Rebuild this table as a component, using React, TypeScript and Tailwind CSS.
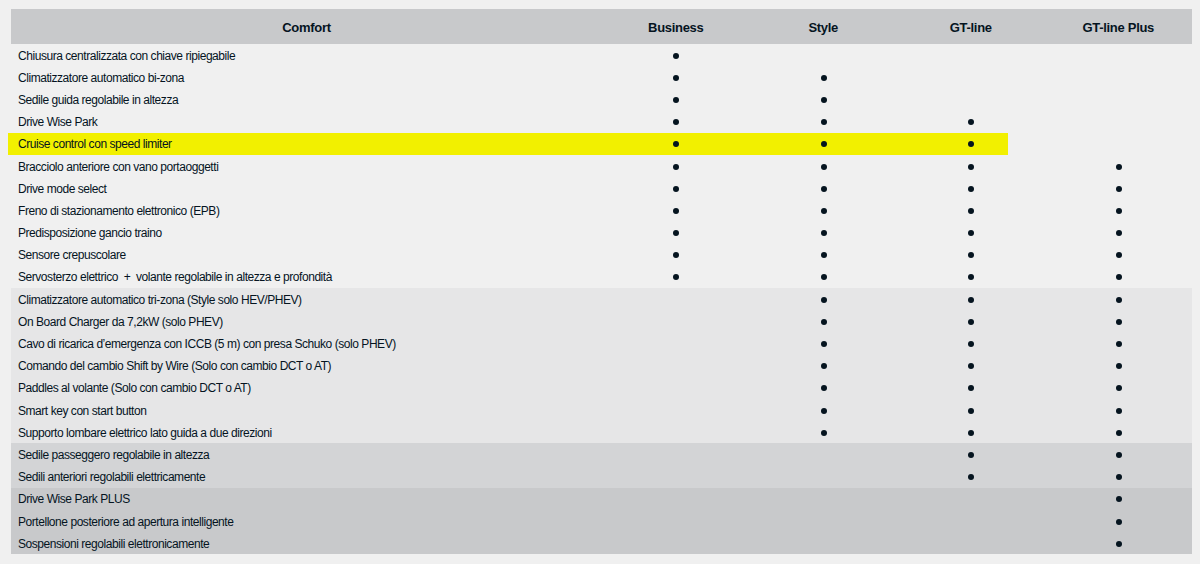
import React from 'react';

type Row = {
  label: string;
  trims: boolean[];
  highlight?: boolean;
};

type Section = {
  bg: string;
  rows: Row[];
};

const trims = ['Business', 'Style', 'GT-line', 'GT-line Plus'];

const all = [true, true, true, true];
const fromStyle = [false, true, true, true];
const fromGt = [false, false, true, true];
const plusOnly = [false, false, false, true];

const sections: Section[] = [
  {
    bg: 'bg-[#f0f0f0]',
    rows: [
      { label: 'Chiusura centralizzata con chiave ripiegabile', trims: [true, false, false, false] },
      { label: 'Climatizzatore automatico bi-zona', trims: [true, true, false, false] },
      { label: 'Sedile guida regolabile in altezza', trims: [true, true, false, false] },
      { label: 'Drive Wise Park', trims: [true, true, true, false] },
      { label: 'Cruise control con speed limiter', trims: [true, true, true, false], highlight: true },
      { label: 'Bracciolo anteriore con vano portaoggetti', trims: all },
      { label: 'Drive mode select', trims: all },
      { label: 'Freno di stazionamento elettronico (EPB)', trims: all },
      { label: 'Predisposizione gancio traino', trims: all },
      { label: 'Sensore crepuscolare', trims: all },
      { label: 'Servosterzo elettrico\u00a0 +\u00a0 volante regolabile in altezza e profondità', trims: all }
    ]
  },
  {
    bg: 'bg-[#e6e6e7]',
    rows: [
      { label: 'Climatizzatore automatico tri-zona (Style solo HEV/PHEV)', trims: fromStyle },
      { label: 'On Board Charger da 7,2kW (solo PHEV)', trims: fromStyle },
      { label: 'Cavo di ricarica d’emergenza con ICCB (5 m) con presa Schuko (solo PHEV)', trims: fromStyle },
      { label: 'Comando del cambio Shift by Wire (Solo con cambio DCT o AT)', trims: fromStyle },
      { label: 'Paddles al volante (Solo con cambio DCT o AT)', trims: fromStyle },
      { label: 'Smart key con start button', trims: fromStyle },
      { label: 'Supporto lombare elettrico lato guida a due direzioni', trims: fromStyle }
    ]
  },
  {
    bg: 'bg-[#d3d4d6]',
    rows: [
      { label: 'Sedile passeggero regolabile in altezza', trims: fromGt },
      { label: 'Sedili anteriori regolabili elettricamente', trims: fromGt }
    ]
  },
  {
    bg: 'bg-[#c8c9cb]',
    rows: [
      { label: 'Drive Wise Park PLUS', trims: plusOnly },
      { label: 'Portellone posteriore ad apertura intelligente', trims: plusOnly },
      { label: 'Sospensioni regolabili elettronicamente', trims: plusOnly }
    ]
  }
];

const Dot = () => <span className="block h-[6px] w-[6px] rounded-full bg-[#05141f]" />;

export default function App() {
  return (
    <div
      className="min-h-[564px] w-[1200px] bg-[#f0f0f0] pl-[11px] pr-[8px] pt-[9px] text-[#05141f]"
      style={{ fontFamily: '"Liberation Sans", Arial, sans-serif' }}
    >
      {/* Header */}
      <div className="grid h-[35px] grid-cols-[591px_repeat(4,147.5px)] items-center bg-[#c8c9cb] pt-[2px] text-[13px] font-bold tracking-[-0.3px]">
        <div className="text-center">Comfort</div>
        {trims.map((t) => (
          <div key={t} className="text-center">
            {t}
          </div>
        ))}
      </div>

      {/* Body */}
      {sections.map((section, si) => (
        <div key={si} className={section.bg}>
          {section.rows.map((row) => (
            <div
              key={row.label}
              className="relative grid h-[22.2px] grid-cols-[591px_repeat(4,147.5px)] items-stretch text-[12px] tracking-[-0.45px]"
            >
              {row.highlight && (
                <div className="absolute -left-[3px] top-0 bottom-0 w-[1000px] bg-[#f2f000]" />
              )}
              <div className="relative flex items-center pl-[7px] pt-[1px]">{row.label}</div>
              {row.trims.map((on, i) => (
                <div key={i} className="relative flex items-center justify-center pl-[1px] pt-[1px]">
                  {on && <Dot />}
                </div>
              ))}
            </div>
          ))}
        </div>
      ))}
    </div>
  );
}
